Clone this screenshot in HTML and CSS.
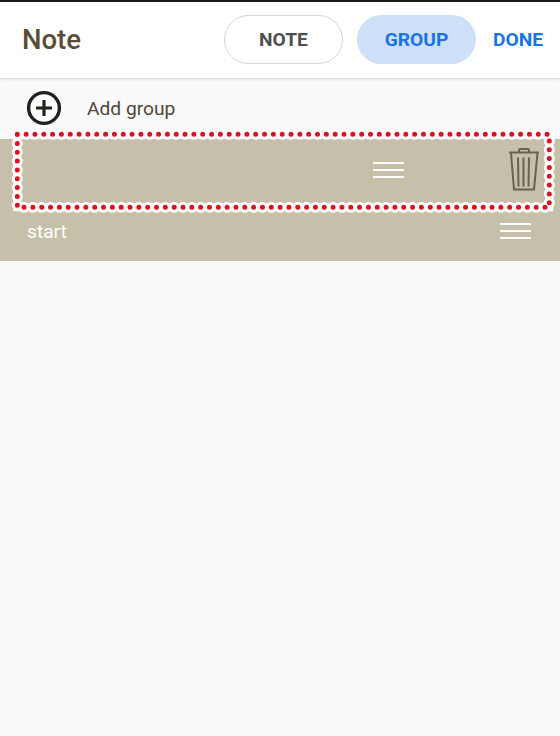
FILE: index.html
```html
<!DOCTYPE html>
<html lang="en">
<head>
    <meta charset="UTF-8">
    <meta name="viewport" content="width=device-width, initial-scale=1.0">
    <title>Note</title>
    <link rel="stylesheet" href="styles.css">
</head>
<body>
    <!-- Top bar -->
    <header class="top-bar">
        <h1 class="top-title">Note</h1>
        <div class="top-actions">
            <button class="pill pill-note">NOTE</button>
            <button class="pill pill-group">GROUP</button>
            <button class="done">DONE</button>
        </div>
    </header>

    <!-- Add group -->
    <div class="add-row">
        <svg class="add-icon" width="36" height="36" viewBox="0 0 36 36">
            <circle cx="18" cy="18" r="15.4" fill="none" stroke="#23211d" stroke-width="3.4"/>
            <path d="M18 10v16M10 18h16" fill="none" stroke="#23211d" stroke-width="3.2"/>
        </svg>
        <span class="add-label">Add group</span>
    </div>

    <!-- Group list -->
    <div class="group-list">
        <div class="group-row group-row-edit">
            <div class="handle"><span></span><span></span><span></span></div>
            <svg class="trash" width="32" height="44" viewBox="0 0 32 44">
                <path d="M1 4.500h30M11 4V2q0-1 1-1h8q1 0 1 1v2" fill="none" stroke="#6a624f" stroke-width="2"/>
                <path d="M3 5l3 36.500h20L29.500 5" fill="none" stroke="#6a624f" stroke-width="2"/>
                <path d="M10 9.500l.5 29M15.500 9.500v29M21 9.500l-.5 29" fill="none" stroke="#6a624f" stroke-width="2"/>
            </svg>
        </div>
        <div class="group-row group-row-start">
            <span class="group-name">start</span>
            <div class="handle"><span></span><span></span><span></span></div>
        </div>

        <!-- Dotted highlight over the first row -->
        <svg class="highlight" width="560" height="90" viewBox="0 0 560 90">
            <rect class="band" x="17.300" y="5.300" width="532" height="73"/>
            <rect class="halo" x="17.300" y="5.300" width="532" height="73"/>
            <rect class="dots" x="17.300" y="5.300" width="532" height="73"/>
        </svg>
    </div>
</body>
</html>
```

FILE: styles.css
```css
/* General page styles */
body {
    margin: 0;
    min-height: 736px;
    background-color: #fafafa;
    font-family: Roboto, "Liberation Sans", sans-serif;
}

/* Top bar */
.top-bar {
    display: flex;
    align-items: center;
    justify-content: space-between;
    box-sizing: border-box;
    height: 78px;
    padding: 0 17px 0 22px;
    background-color: #fff;
    border-top: 2px solid #1a1a1a;
    box-shadow: 0 1px 3px rgba(0, 0, 0, 0.16);
}

.top-title {
    margin: 0 0 2px;
    font-size: 27.500px;
    font-weight: 500;
    color: #5a4c38;
}

.top-actions {
    display: flex;
    align-items: center;
    margin-bottom: 1px;
}

.pill {
    width: 119px;
    height: 49px;
    padding: 0;
    border-radius: 25px;
    font-family: inherit;
    font-size: 19.200px;
    font-weight: 700;
}

.pill-note {
    margin-right: 14px;
    background-color: #fff;
    border: 1.500px solid #d4d4d4;
    color: #4c4f54;
}

.pill-group {
    margin-right: 17px;
    background-color: #cde0f8;
    border: none;
    color: #1a73e8;
}

.done {
    padding: 0;
    background: none;
    border: none;
    font-family: inherit;
    font-size: 19.200px;
    font-weight: 700;
    color: #1a73e8;
}

/* Add group */
.add-row {
    display: flex;
    align-items: center;
    height: 61px;
    padding-left: 25.500px;
}

.add-icon {
    margin: 0 25.500px 1px 0;
}

.add-label {
    font-size: 19.200px;
    color: #51483a;
}

/* Group list */
.group-list {
    position: relative;
    background-color: #c6bfa9;
}

.group-row {
    display: flex;
    align-items: center;
}

.group-row-edit {
    justify-content: flex-end;
    height: 62px;
    padding-right: 20px;
}

.group-row-start {
    justify-content: space-between;
    height: 60px;
    padding: 0 29px 0 27px;
}

.group-name {
    font-size: 19.200px;
    color: #fff;
}

.handle {
    display: flex;
    flex-direction: column;
    gap: 4.700px;
    width: 31px;
}

.handle span {
    height: 2px;
    background-color: #fff;
}

.group-row-edit .handle {
    margin-right: 104px;
}

.highlight {
    position: absolute;
    top: -10px;
    left: 0;
}

.band,
.halo,
.dots {
    fill: none;
}

.band {
    stroke: #fff;
    stroke-width: 8px;
}

.halo,
.dots {
    stroke-linecap: round;
    stroke-dasharray: 0 8.830;
}

.halo {
    stroke: #fff;
    stroke-width: 11px;
}

.dots {
    stroke: #e0101e;
    stroke-width: 5px;
}
```
